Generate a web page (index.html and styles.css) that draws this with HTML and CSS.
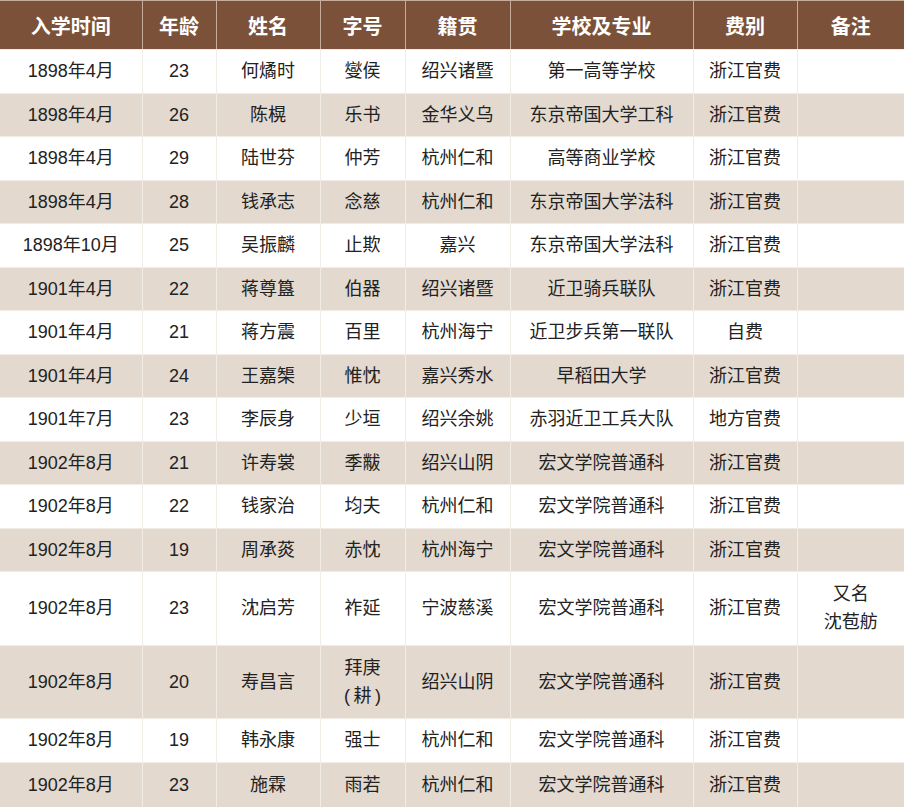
FILE: index.html
```html
<!DOCTYPE html>
<html lang="zh">
<head>
<meta charset="utf-8">
<title>留学生名录</title>
<link rel="stylesheet" href="styles.css">
</head>
<body>
<table class="roster">
  <colgroup>
    <col class="c1"><col class="c2"><col class="c3"><col class="c4"><col class="c5"><col class="c6"><col class="c7"><col class="c8">
  </colgroup>
  <thead>
    <tr class="head"><th>入学时间</th><th>年龄</th><th>姓名</th><th>字号</th><th>籍贯</th><th>学校及专业</th><th>费别</th><th>备注</th></tr>
  </thead>
  <tbody>
    <tr><td>1898年4月</td><td>23</td><td>何燏时</td><td>燮侯</td><td>绍兴诸暨</td><td>第一高等学校</td><td>浙江官费</td><td></td></tr>
    <tr class="alt"><td>1898年4月</td><td>26</td><td>陈榥</td><td>乐书</td><td>金华义乌</td><td>东京帝国大学工科</td><td>浙江官费</td><td></td></tr>
    <tr><td>1898年4月</td><td>29</td><td>陆世芬</td><td>仲芳</td><td>杭州仁和</td><td>高等商业学校</td><td>浙江官费</td><td></td></tr>
    <tr class="alt"><td>1898年4月</td><td>28</td><td>钱承志</td><td>念慈</td><td>杭州仁和</td><td>东京帝国大学法科</td><td>浙江官费</td><td></td></tr>
    <tr><td>1898年10月</td><td>25</td><td>吴振麟</td><td>止欺</td><td>嘉兴</td><td>东京帝国大学法科</td><td>浙江官费</td><td></td></tr>
    <tr class="alt"><td>1901年4月</td><td>22</td><td>蒋尊簋</td><td>伯器</td><td>绍兴诸暨</td><td>近卫骑兵联队</td><td>浙江官费</td><td></td></tr>
    <tr><td>1901年4月</td><td>21</td><td>蒋方震</td><td>百里</td><td>杭州海宁</td><td>近卫步兵第一联队</td><td>自费</td><td></td></tr>
    <tr class="alt"><td>1901年4月</td><td>24</td><td>王嘉榘</td><td>惟忱</td><td>嘉兴秀水</td><td>早稻田大学</td><td>浙江官费</td><td></td></tr>
    <tr><td>1901年7月</td><td>23</td><td>李辰身</td><td>少垣</td><td>绍兴余姚</td><td>赤羽近卫工兵大队</td><td>地方官费</td><td></td></tr>
    <tr class="alt"><td>1902年8月</td><td>21</td><td>许寿裳</td><td>季黻</td><td>绍兴山阴</td><td>宏文学院普通科</td><td>浙江官费</td><td></td></tr>
    <tr><td>1902年8月</td><td>22</td><td>钱家治</td><td>均夫</td><td>杭州仁和</td><td>宏文学院普通科</td><td>浙江官费</td><td></td></tr>
    <tr class="alt"><td>1902年8月</td><td>19</td><td>周承菼</td><td>赤忱</td><td>杭州海宁</td><td>宏文学院普通科</td><td>浙江官费</td><td></td></tr>
    <tr class="tall"><td>1902年8月</td><td>23</td><td>沈启芳</td><td>祚延</td><td>宁波慈溪</td><td>宏文学院普通科</td><td>浙江官费</td><td>又名<br>沈苞舫</td></tr>
    <tr class="alt tall"><td>1902年8月</td><td>20</td><td>寿昌言</td><td>拜庚<br>(&#8201;耕&#8201;)</td><td>绍兴山阴</td><td>宏文学院普通科</td><td>浙江官费</td><td></td></tr>
    <tr><td>1902年8月</td><td>19</td><td>韩永康</td><td>强士</td><td>杭州仁和</td><td>宏文学院普通科</td><td>浙江官费</td><td></td></tr>
    <tr class="alt last"><td>1902年8月</td><td>23</td><td>施霖</td><td>雨若</td><td>杭州仁和</td><td>宏文学院普通科</td><td>浙江官费</td><td></td></tr>
  </tbody>
</table>
</body>
</html>
```

FILE: styles.css
```css
html, body {
  margin: 0;
  padding: 0;
  background: #ffffff;
}

.roster {
  width: 904px;
  table-layout: fixed;
  border-collapse: collapse;
  font-family: "Liberation Sans", "Noto Sans CJK SC", sans-serif;
  color: #222222;
}

.c1 { width: 142px; }
.c2 { width: 74px; }
.c3 { width: 104px; }
.c4 { width: 85px; }
.c5 { width: 105px; }
.c6 { width: 183px; }
.c7 { width: 104px; }
.c8 { width: 107px; }

.roster th,
.roster td {
  padding: 0;
  text-align: center;
  vertical-align: middle;
  border: 1px solid #f2ece6;
}

.roster tr > :first-child { border-left: none; }
.roster tr > :last-child { border-right: none; }

.head th {
  height: 48px;
  background: #7b5239;
  color: #ffffff;
  font-size: 20px;
  font-weight: bold;
  border-top: 1px solid #d8c9bb;
  border-color: #c5ad9a;
  border-bottom-color: #f2ece6;
}

.roster td {
  height: 42.5px;
  font-size: 18px;
  line-height: 28px;
}

.roster .alt td {
  background: #e3d9cf;
}

.roster .tall td {
  height: 72.5px;
}

.roster .last td {
  height: 44px;
  border-bottom: none;
}
```
